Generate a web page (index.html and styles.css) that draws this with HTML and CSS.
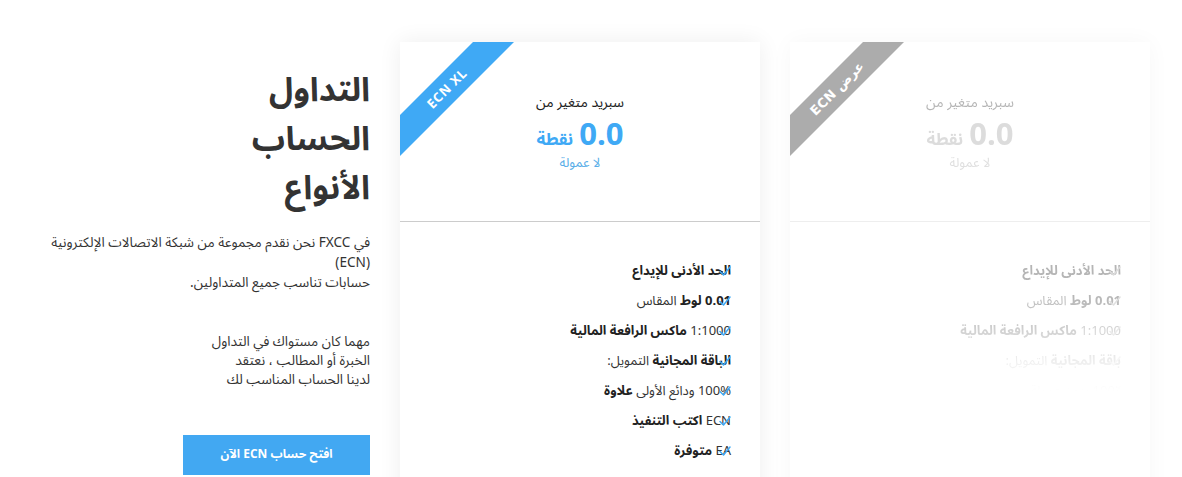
FILE: index.html
```html
<!DOCTYPE html>
<html lang="ar" dir="rtl">
<head>
<meta charset="utf-8">
<title>أنواع الحساب</title>
<link rel="stylesheet" href="styles.css">
</head>
<body>
<div class="page">
  <div class="card card--muted">
    <div class="ribbon"><span class="ribbon-band ribbon-band--gray">عرض ECN</span></div>
    <div class="card-body">
      <div class="card-top">
        <div class="spread-label">سبريد متغير من</div>
        <div class="spread-value"><span class="num">0.0</span> <span class="unit">نقطة</span></div>
        <div class="commission">لا عمولة</div>
      </div>
      <ul class="features">
        <li><svg class="check" viewBox="0 0 12 10" width="12" height="10"><path d="M1 5.5 L4.5 9 L11 1"/></svg><b>الحد الأدنى للإيداع</b></li>
        <li><svg class="check" viewBox="0 0 12 10" width="12" height="10"><path d="M1 5.5 L4.5 9 L11 1"/></svg><b>0.01 لوط</b> المقاس</li>
        <li><svg class="check" viewBox="0 0 12 10" width="12" height="10"><path d="M1 5.5 L4.5 9 L11 1"/></svg>1:1000 <b>ماكس الرافعة المالية</b></li>
        <li><svg class="check" viewBox="0 0 12 10" width="12" height="10"><path d="M1 5.5 L4.5 9 L11 1"/></svg><b>باقة المجانية</b> التمويل:</li>
        <li><svg class="check" viewBox="0 0 12 10" width="12" height="10"><path d="M1 5.5 L4.5 9 L11 1"/></svg>100٪ بدون عمولة</li>
        <li>&nbsp;</li>
      </ul>
    </div>
  </div>

  <div class="card">
    <div class="ribbon"><span class="ribbon-band">ECN XL</span></div>
    <div class="card-body">
      <div class="card-top">
        <div class="spread-label">سبريد متغير من</div>
        <div class="spread-value"><span class="num">0.0</span> <span class="unit">نقطة</span></div>
        <div class="commission">لا عمولة</div>
      </div>
      <ul class="features">
        <li><svg class="check" viewBox="0 0 12 10" width="12" height="10"><path d="M1 5.5 L4.5 9 L11 1"/></svg><b>الحد الأدنى للإيداع</b></li>
        <li><svg class="check" viewBox="0 0 12 10" width="12" height="10"><path d="M1 5.5 L4.5 9 L11 1"/></svg><b>0.01 لوط</b> المقاس</li>
        <li><svg class="check" viewBox="0 0 12 10" width="12" height="10"><path d="M1 5.5 L4.5 9 L11 1"/></svg>1:1000 <b>ماكس الرافعة المالية</b></li>
        <li><svg class="check" viewBox="0 0 12 10" width="12" height="10"><path d="M1 5.5 L4.5 9 L11 1"/></svg><b>الباقة المجانية</b> التمويل:</li>
        <li><svg class="check" viewBox="0 0 12 10" width="12" height="10"><path d="M1 5.5 L4.5 9 L11 1"/></svg>100% ودائع الأولى <b>علاوة</b></li>
        <li><svg class="check" viewBox="0 0 12 10" width="12" height="10"><path d="M1 5.5 L4.5 9 L11 1"/></svg>ECN <b>اكتب التنفيذ</b></li>
        <li><svg class="check" viewBox="0 0 12 10" width="12" height="10"><path d="M1 5.5 L4.5 9 L11 1"/></svg>EA <b>متوفرة</b></li>
      </ul>
    </div>
  </div>

  <div class="intro">
    <h1 class="intro-title">التداول<br>الحساب<br>الأنواع</h1>
    <p class="intro-text"><span class="nowrap">في FXCC نحن نقدم مجموعة من شبكة الاتصالات الإلكترونية</span><br>(ECN)<br>حسابات تناسب جميع المتداولين.</p>
    <p class="intro-text intro-text--second">مهما كان مستواك في التداول<br>الخبرة أو المطالب ، نعتقد<br>لدينا الحساب المناسب لك</p>
    <a class="cta" href="#">افتح حساب ECN الآن</a>
  </div>
</div>
</body>
</html>
```

FILE: styles.css
```css
html, body {
  margin: 0;
  padding: 0;
  background: #ffffff;
}

body {
  font-family: "Noto Sans Arabic", "DejaVu Sans", "Noto Sans", sans-serif;
  color: #333333;
  height: 477px;
  overflow: hidden;
}

.page {
  display: flex;
  flex-direction: row;
  align-items: flex-start;
  gap: 30px;
  padding: 42px 32px 0 0;
}

/* ---------- cards ---------- */
.card {
  position: relative;
  width: 360px;
  height: 470px;
  flex: 0 0 360px;
  background: #ffffff;
  box-shadow: 0 0 22px rgba(0, 0, 0, 0.07);
  overflow: hidden;
}

.card--muted {
  box-shadow: 0 0 22px rgba(0, 0, 0, 0.035);
}

.card-body {
  position: relative;
}

.card--muted .card-body {
  opacity: 0.33;
  filter: grayscale(1);
  -webkit-mask-image: linear-gradient(to bottom, #000 64%, rgba(0,0,0,0.75) 71%, rgba(0,0,0,0.4) 77%, rgba(0,0,0,0.15) 83%, transparent 89%);
  mask-image: linear-gradient(to bottom, #000 64%, rgba(0,0,0,0.75) 71%, rgba(0,0,0,0.4) 77%, rgba(0,0,0,0.15) 83%, transparent 89%);
}

.ribbon {
  position: absolute;
  top: 0;
  left: 0;
  width: 130px;
  height: 130px;
  overflow: hidden;
  z-index: 2;
}

.ribbon-band {
  position: absolute;
  left: -53px;
  top: 32px;
  width: 200px;
  height: 29px;
  line-height: 29px;
  text-align: center;
  background: #3fa9f5;
  color: #ffffff;
  font-family: "Open Sans", "DejaVu Sans", sans-serif;
  font-weight: 700;
  font-size: 13px;
  letter-spacing: 0.8px;
  transform: rotate(-45deg);
}

.ribbon-band--gray {
  background: #acacac;
  font-family: "DejaVu Sans", "Open Sans", sans-serif;
  letter-spacing: 0.5px;
}

.card-top {
  height: 180px;
  box-sizing: border-box;
  padding-top: 51px;
  border-bottom: 1px solid #cccccc;
  display: flex;
  flex-direction: column;
  align-items: center;
}

.spread-label {
  font-size: 14px;
  line-height: 20px;
  color: #222222;
}

.spread-value {
  margin-top: 2px;
  height: 36px;
  line-height: 36px;
  color: #3fa9f5;
  display: flex;
  align-items: baseline;
  gap: 6px;
}

.spread-value .num {
  font-family: "Open Sans", "DejaVu Sans", sans-serif;
  font-size: 31px;
  font-weight: 700;
}

.spread-value .unit {
  font-size: 17px;
  font-weight: 700;
}

.commission {
  margin-top: 3px;
  font-size: 13px;
  line-height: 18px;
  color: #5aaee8;
}

.features {
  list-style: none;
  margin: 0;
  padding: 34px 29px 0 0;
}

.features li {
  position: relative;
  font-size: 13px;
  line-height: 30px;
  color: #333333;
}

.features li b {
  font-weight: 700;
  color: #222222;
}

.check {
  position: absolute;
  right: 0;
  top: 10px;
  fill: none;
  stroke: #3fa9f5;
  stroke-width: 1.5;
  stroke-linecap: round;
  stroke-linejoin: round;
}

/* ---------- intro column ---------- */
.intro {
  width: 187px;
  flex: 0 0 187px;
  padding-top: 24px;
}

.intro-title {
  margin: 0;
  font-size: 33px;
  line-height: 49px;
  font-weight: 700;
  color: #333333;
}

.intro-text {
  margin: 20px 0 0 0;
  font-size: 13.6px;
  line-height: 20px;
  color: #333333;
}

.nowrap {
  white-space: nowrap;
}

.intro-text--second {
  margin-top: 39px;
  line-height: 19px;
}

.cta {
  display: block;
  margin-top: 46px;
  height: 40px;
  line-height: 40px;
  background: #42a8f2;
  color: #ffffff;
  text-align: center;
  text-decoration: none;
  font-size: 12px;
  font-weight: 700;
}
```
